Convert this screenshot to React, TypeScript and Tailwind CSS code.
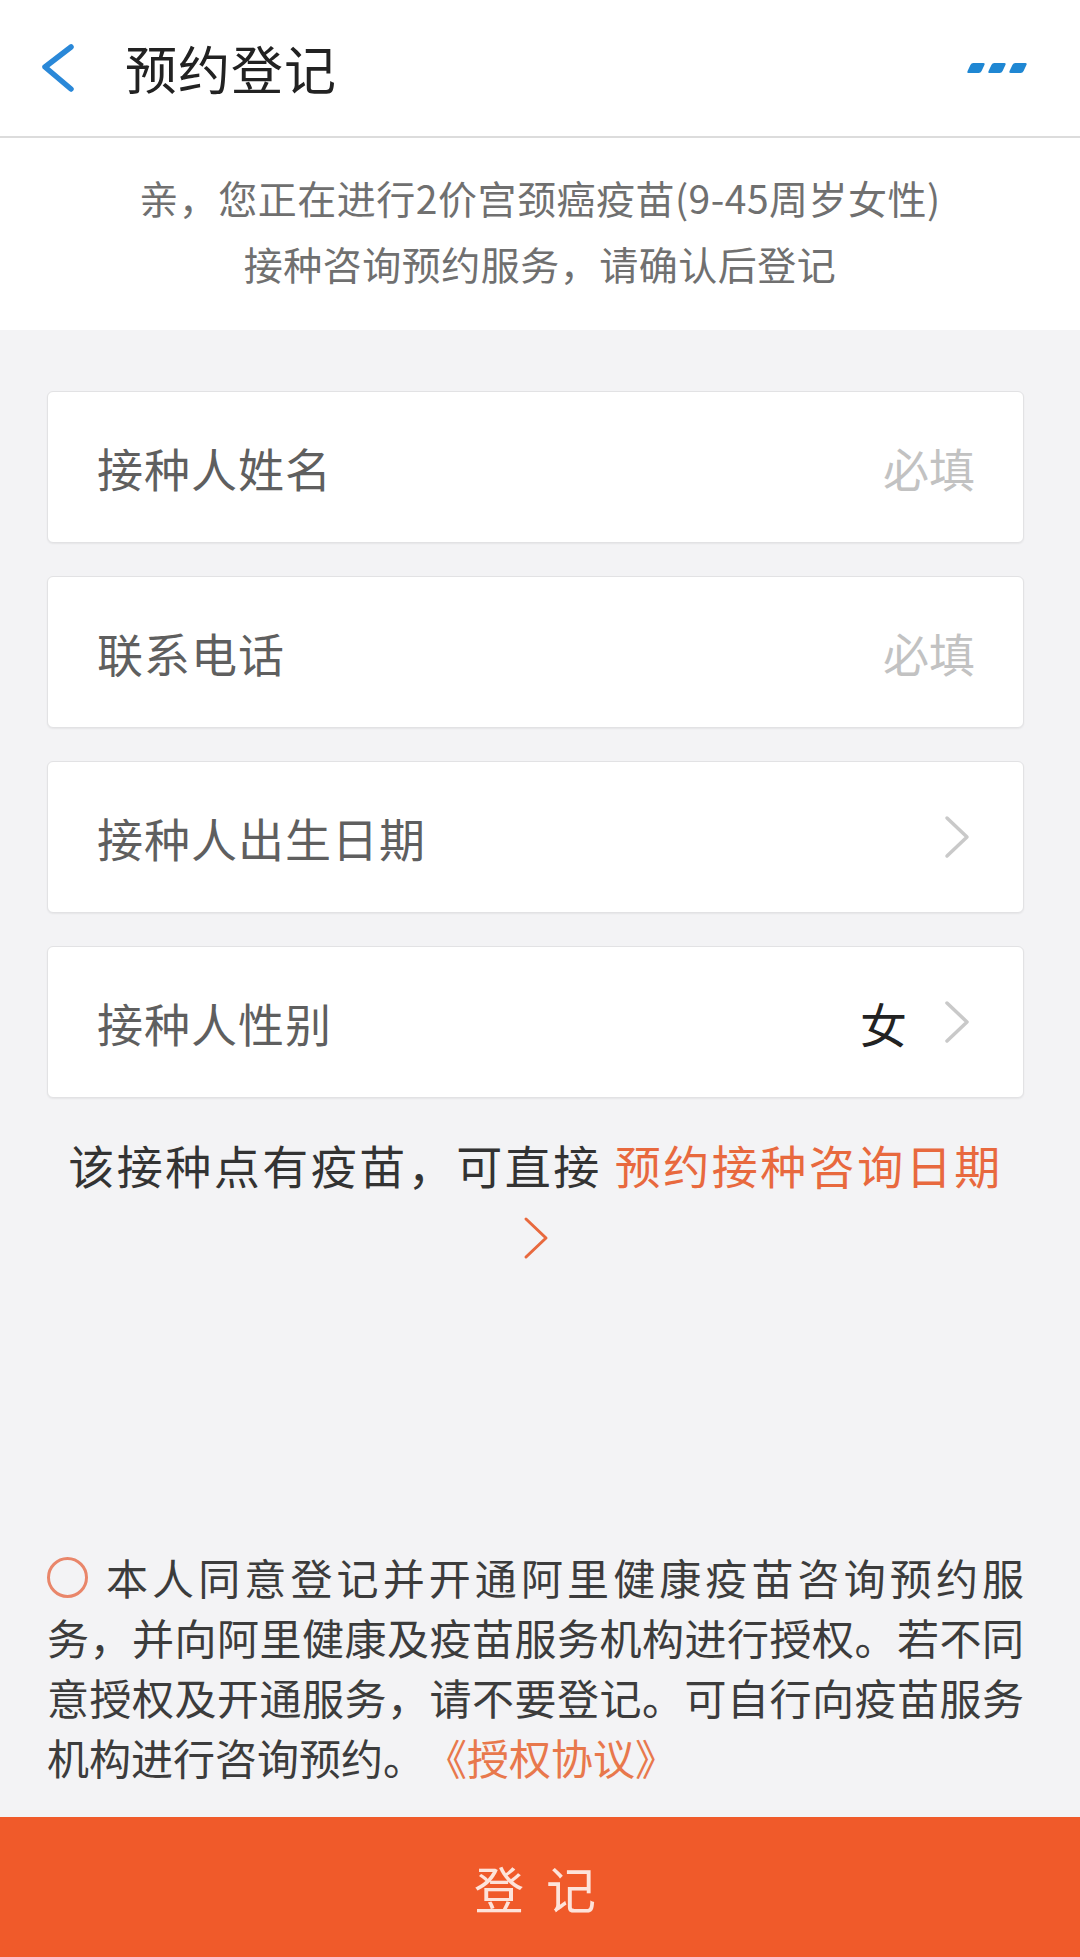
import React from 'react';

const rows = [
  { label: '接种人姓名', placeholder: '必填' },
  { label: '联系电话', placeholder: '必填' },
  { label: '接种人出生日期', arrow: true },
  { label: '接种人性别', value: '女', arrow: true },
];

function Chevron({ color, width = 3.5 }: { color: string; width?: number }) {
  return (
    <svg width="28" height="44" viewBox="0 0 28 44" fill="none">
      <polyline points="4,3 24,22 4,41" stroke={color} strokeWidth={width} strokeLinecap="round" strokeLinejoin="round" />
    </svg>
  );
}

export default function App() {
  return (
    <div className="w-[1080px] h-[1957px] flex flex-col bg-[#f3f3f5] font-['Noto_Sans_CJK_SC','Noto_Sans',sans-serif] [text-spacing-trim:space-all] overflow-hidden">
      {/* Header */}
      <header className="h-[138px] shrink-0 bg-white border-b-2 border-[#dcdcdc] flex items-center pl-[40px] pr-[55px]">
        <svg width="36" height="50" viewBox="0 0 36 50" fill="none">
          <polyline points="31,4 5,24 31,46" stroke="#2a88d8" strokeWidth="5.5" strokeLinecap="round" strokeLinejoin="round" />
        </svg>
        <h1 className="ml-[49px] text-[52px] leading-none text-[#222] tracking-[1px]">预约登记</h1>
        <div className="ml-auto flex items-center gap-[7px]">
          <span className="w-[14px] h-[10px] rounded-[2px] bg-[#1f87d3] -skew-x-[25deg]" />
          <span className="w-[14px] h-[10px] rounded-[2px] bg-[#1f87d3] -skew-x-[25deg]" />
          <span className="w-[14px] h-[10px] rounded-[2px] bg-[#1f87d3] -skew-x-[25deg]" />
        </div>
      </header>

      {/* Intro */}
      <div className="shrink-0 bg-white pt-[26px] pb-[34px] text-center text-[39px] leading-[66px] text-[#707070] tracking-[0.5px]">
        <p>亲，您正在进行2价宫颈癌疫苗(9-45周岁女性)</p>
        <p>接种咨询预约服务，请确认后登记</p>
      </div>

      {/* Form */}
      <div className="pl-[47px] pr-[56px] pt-[61px] flex flex-col gap-[33px]">
        {rows.map((row) => (
          <div
            key={row.label}
            className={`h-[152px] bg-white border border-[#e2e2e4] rounded-[6px] shadow-[0_1px_2px_rgba(0,0,0,0.06)] flex items-center pl-[49px] ${row.arrow ? 'pr-[52px]' : 'pr-[48px]'}`}
          >
            <span className="text-[46px] leading-none text-[#5f5f5f] tracking-[1px]">{row.label}</span>
            <div className="ml-auto flex items-center">
              {row.placeholder && (
                <span className="text-[46px] leading-none text-[#c2c2c2]">{row.placeholder}</span>
              )}
              {row.value && (
                <span className="text-[47px] leading-none text-[#222] mr-[36px]">{row.value}</span>
              )}
              {row.arrow && <Chevron color="#c9c9c9" />}
            </div>
          </div>
        ))}
      </div>

      <div className="pl-[47px] pr-[56px] mt-[32px] text-center">
        <p className="text-[46px] leading-[68px] text-[#333] tracking-[2.5px]">
          该接种点有疫苗，可直接 <span className="text-[#e8693e]">预约接种咨询日期</span>
        </p>
        <div className="flex justify-center pt-[18px]">
          <Chevron color="#e8693e" width={3} />
        </div>
      </div>

      <div className="flex-1" />

      {/* Agreement */}
      <div className="pl-[47px] pr-[56px] pb-[30px] text-[42px] leading-[60px] text-[#3c3c3c]">
        <div className="flex items-center">
          <span className="w-[41px] h-[41px] shrink-0 rounded-full border-[3px] border-[#e9866a]" />
          <span className="flex-1 ml-[18px] text-justify [text-align-last:justify]">本人同意登记并开通阿里健康疫苗咨询预约服</span>
        </div>
        <p className="text-justify [text-align-last:justify]">务，并向阿里健康及疫苗服务机构进行授权。若不同</p>
        <p className="text-justify [text-align-last:justify]">意授权及开通服务，请不要登记。可自行向疫苗服务</p>
        <p>
          机构进行咨询预约。<span className="text-[#e8784c]">《授权协议》</span>
        </p>
      </div>

      {/* Submit */}
      <button className="h-[140px] shrink-0 bg-[#f05a2a] flex items-center justify-center">
        <span className="text-[50px] leading-none text-[#fde3da] tracking-[22px] pl-[12px]">登记</span>
      </button>
    </div>
  );
}
